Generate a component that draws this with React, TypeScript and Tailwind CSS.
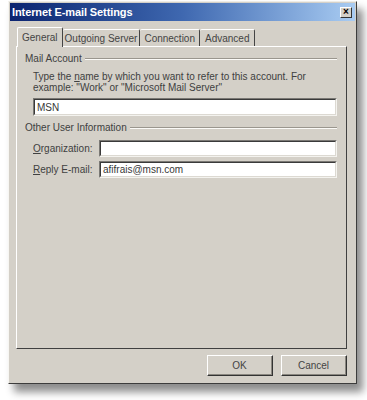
import React from "react";

const font = { fontFamily: '"Liberation Sans", Arial, sans-serif' };

function Sunken({ value, className }: { value?: string; className?: string }) {
  return (
    <div
      className={`bg-white border-t border-l border-t-[#7a7874] border-l-[#7a7874] border-b border-r border-b-[#f4f3ef] border-r-[#f4f3ef] ${className ?? ""}`}
    >
      <div className="h-full border-t border-l border-t-[#3a3a3a] border-l-[#3a3a3a] border-b border-r border-b-[#dcd9d2] border-r-[#dcd9d2] pl-[2px] flex items-center text-[10px] text-[#383838]">
        {value}
      </div>
    </div>
  );
}

function Button({ label }: { label: string }) {
  return (
    <div className="w-[66px] h-[21px] border border-t-[#fff] border-l-[#fff] border-b-[#333] border-r-[#333] bg-[#d4d0c8]">
      <div className="h-full flex items-center justify-center border-b border-r border-b-[#8a8780] border-r-[#8a8780] text-[10px] text-[#444]">
        {label}
      </div>
    </div>
  );
}

function Group({ title }: { title: string }) {
  return (
    <div className="flex items-center gap-[3px] pr-[9px] h-[12px]">
      <span className="text-[10px] leading-[12px] text-[#404040] whitespace-nowrap">{title}</span>
      <div className="flex-1 h-[2px] border-t border-t-[#9a968e] border-b border-b-[#fbfaf7]" />
    </div>
  );
}

export default function App() {
  return (
    <div className="w-[367px] h-[400px] bg-white relative" style={font}>
      <div className="absolute left-[8px] top-[1px] w-[349px] h-[383px] bg-[#d4d0c8] border border-t-[#eeece6] border-l-[#f7f6f2] border-b-[#3c3c3c] border-r-[#3c3c3c] shadow-[6px_8px_8px_rgba(0,0,0,0.45)] flex flex-col px-[1px] pt-[1px]">
        {/* title bar */}
        <div className="h-[18px] flex items-center justify-between bg-gradient-to-r from-[#0c2470] via-[#3f68b0] to-[#a9ccf2] pl-[2px] pr-[3px]">
          <span className="text-white font-bold text-[11px] tracking-[-0.1px]">Internet E-mail Settings</span>
          <div className="w-[12px] h-[11px] bg-[#d4d0c8] border border-t-white border-l-white border-b-[#333] border-r-[#333] flex items-center justify-center text-[10px] leading-none text-black font-bold">
            ×
          </div>
        </div>
        {/* body */}
        <div className="flex flex-col pl-[6px] pr-[8px] pt-[6px] flex-1">
          {/* tabs */}
          <div className="flex items-end h-[19px] pl-[1px] relative z-10">
            <div className="h-[20px] px-[4px] bg-[#d4d0c8] border-t border-l border-t-white border-l-white border-r border-r-[#444] rounded-t-[2px] flex items-center text-[10px] text-[#444] mb-[-1px]">
              General
            </div>
            <div className="h-[17px] px-[2px] border-t border-t-white border-r border-r-[#444] rounded-t-[2px] flex items-center text-[10px] text-[#444]">
              Outgoing Server
            </div>
            <div className="h-[17px] px-[4px] border-t border-t-white border-r border-r-[#444] rounded-t-[2px] flex items-center text-[10px] text-[#444]">
              Connection
            </div>
            <div className="h-[17px] px-[5px] border-t border-t-white border-r border-r-[#444] rounded-t-[2px] flex items-center text-[10px] text-[#444]">
              Advanced
            </div>
          </div>
          {/* panel */}
          <div className="h-[303px] border border-t-white border-l-white border-b-[#404040] border-r-[#404040] flex flex-col pl-[8px] pt-[6px]">
            <Group title="Mail Account" />
            <div className="pl-[8px] pr-[9px] pt-[6px] text-[10px] leading-[11px] text-[#404040]">
              <div>
                Type the <span className="underline">n</span>ame by which you want to refer to this account. For
              </div>
              <div>example: "Work" or "Microsoft Mail Server"</div>
            </div>
            <div className="pl-[8px] pr-[9px] pt-[5px]">
              <Sunken value="MSN" className="h-[18px]" />
            </div>
            <div className="pt-[6px]">
              <Group title="Other User Information" />
            </div>
            <div className="pl-[8px] pr-[9px] pt-[6px] flex flex-col gap-[4px]">
              <div className="flex items-center h-[17px]">
                <span className="w-[66px] text-[10px] text-[#404040]">
                  <span className="underline">O</span>rganization:
                </span>
                <Sunken className="flex-1 h-[17px]" />
              </div>
              <div className="flex items-center h-[17px]">
                <span className="w-[66px] text-[10px] text-[#404040]">
                  <span className="underline">R</span>eply E-mail:
                </span>
                <Sunken value="afifrais@msn.com" className="flex-1 h-[17px]" />
              </div>
            </div>
          </div>
          {/* buttons */}
          <div className="flex justify-end gap-[8px] pt-[6px]">
            <Button label="OK" />
            <Button label="Cancel" />
          </div>
        </div>
      </div>
    </div>
  );
}
